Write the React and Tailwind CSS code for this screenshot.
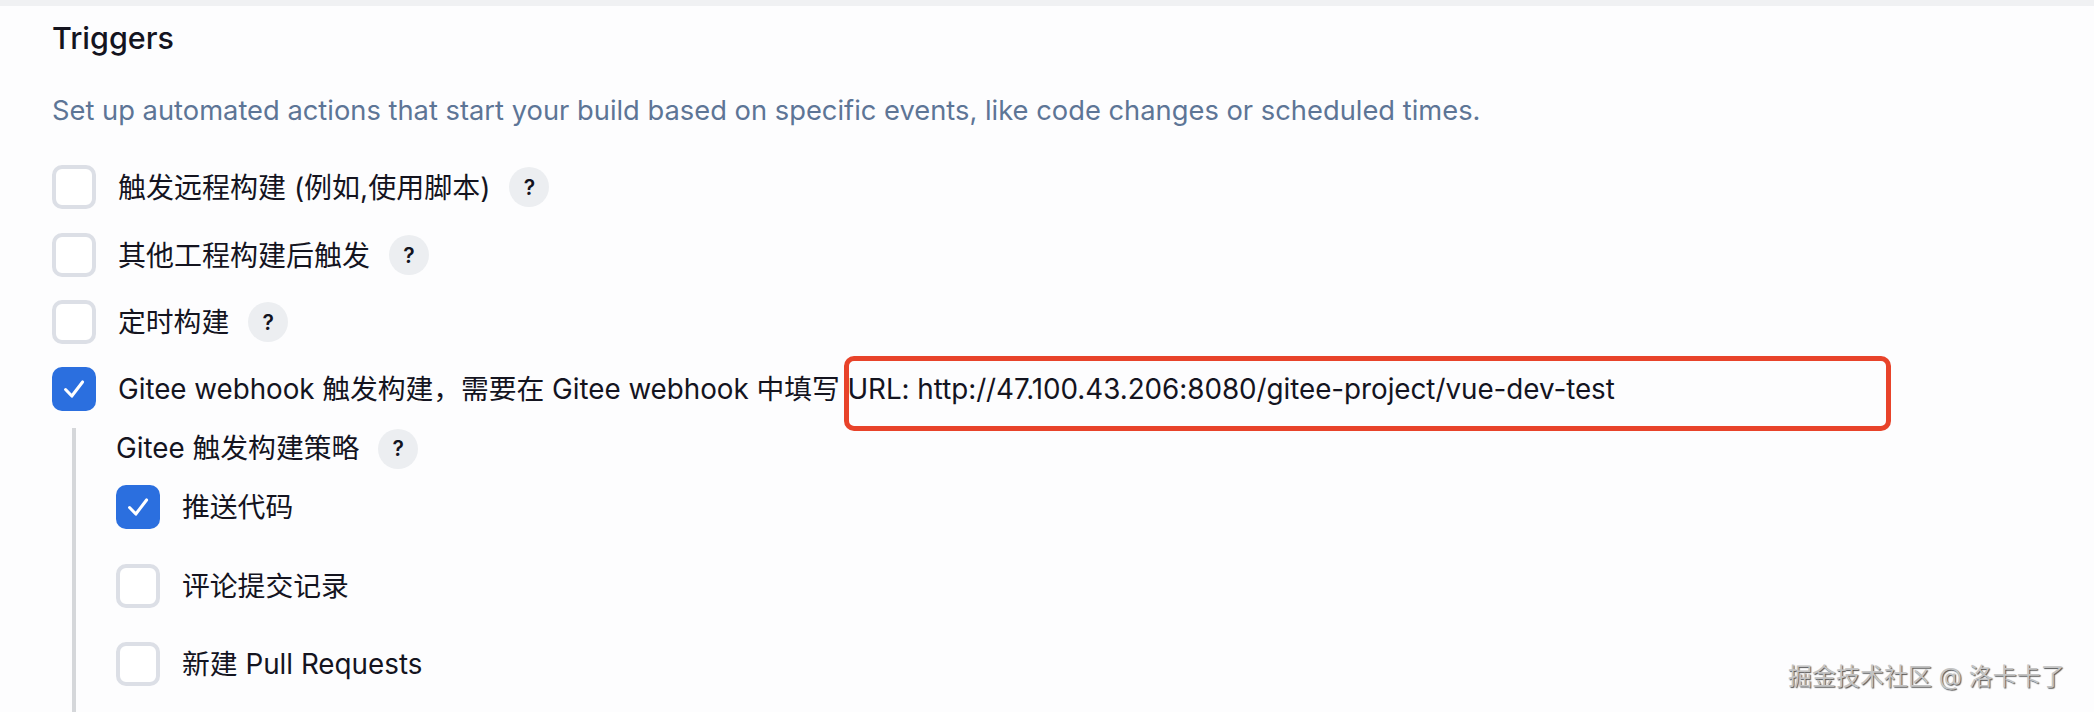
import React from "react";

const Check = () => (
  <svg viewBox="0 0 24 24" className="w-[26px] h-[26px]" fill="none" stroke="#fff" strokeWidth="2.8" strokeLinecap="round" strokeLinejoin="round">
    <path d="M4.2 12.5L10 18.5L19.9 5.5" />
  </svg>
);

const Box = ({ checked }) =>
  checked ? (
    <span className="flex items-center justify-center w-11 h-11 shrink-0 rounded-[10px] bg-[#2b6fdf]">
      <Check />
    </span>
  ) : (
    <span className="block w-11 h-11 shrink-0 rounded-[10px] border-4 border-[#dcdfe6] bg-white" />
  );

const Help = () => (
  <span className="flex items-center justify-center w-10 h-10 ml-[19px] shrink-0 rounded-full bg-[#eceef1] text-[21px] font-semibold text-[#14141f]">
    ?
  </span>
);

const Row = ({ checked, children, help, className = "", textClass = "" }) => (
  <div className={`flex items-center h-11 ${className}`}>
    <Box checked={checked} />
    <span className={`ml-[22px] pt-px whitespace-nowrap ${textClass}`}>{children}</span>
    {help && <Help />}
  </div>
);

export default function App() {
  return (
    <div
      className="relative h-[712px] overflow-hidden bg-[#fdfdfe] text-[27.8px] leading-none text-[#14141f]"
      style={{ fontFamily: 'Inter, "Noto Sans CJK SC", sans-serif' }}
    >
      <div className="h-[6px] bg-[#f0f1f3]" />
      <div className="pl-[52px]">
        <h2 className="mt-[18px] h-7 text-[30.5px] leading-7 font-medium">Triggers</h2>
        <p className="mt-[45px] h-[28px] text-[27.32px] leading-7 text-[#5d7596]">
          Set up automated actions that start your build based on specific events, like code changes or scheduled times.
        </p>

        <Row className="mt-10" textClass="text-[28px]" help>触发远程构建 (例如,使用脚本)</Row>
        <Row className="mt-6" textClass="text-[28px]" help>其他工程构建后触发</Row>
        <Row className="mt-[23px]" help>定时构建</Row>
        <Row className="mt-[23px]" textClass="tracking-[-0.04px]" checked>Gitee webhook 触发构建，需要在 Gitee webhook 中填写 URL: http://47.100.43.206:8080/gitee-project/vue-dev-test</Row>

        <div className="mt-[17px] ml-5 border-l-[4px] border-[#d5d7da] pl-10 h-[300px]">
          <div className="flex items-center h-10 pt-px">
            <span className="whitespace-nowrap">Gitee 触发构建策略</span>
            <Help />
          </div>
          <Row className="mt-[17px]" checked>推送代码</Row>
          <Row className="mt-[35px]">评论提交记录</Row>
          <Row className="mt-[34px]">新建 Pull Requests</Row>
        </div>
      </div>

      {/* annotation and watermark lie over the page */}
      <div className="absolute left-[844px] top-[356px] w-[1047px] h-[75px] rounded-[10px] border-[5px] border-[#e8432a]" />
      <div className="absolute left-[1788px] top-[664px] text-[24px] leading-[26px] whitespace-nowrap text-[#c4c4c4] [text-shadow:1px_1px_1px_#555]">
        掘金技术社区 @ 洛卡卡了
      </div>
    </div>
  );
}
